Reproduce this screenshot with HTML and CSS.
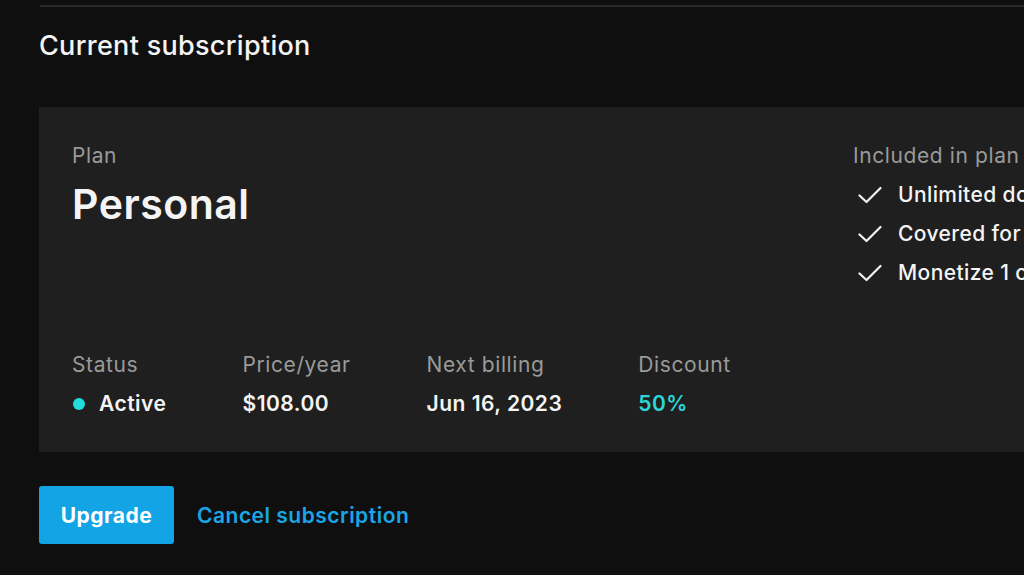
FILE: index.html
```html
<!DOCTYPE html>
<html lang="en">
<head>
<meta charset="utf-8">
<title>Current subscription</title>
<link rel="stylesheet" href="styles.css">
</head>
<body>
<div class="page">
  <div class="rule"></div>
  <h1 class="title">Current subscription</h1>
  <section class="card">
    <div class="main">
      <div class="plan">
        <div class="label">Plan</div>
        <div class="plan-name">Personal</div>
      </div>
      <div class="stats">
        <div class="stat">
          <div class="label">Status</div>
          <div class="value"><span class="dot"></span>Active</div>
        </div>
        <div class="stat">
          <div class="label">Price/year</div>
          <div class="value">$108.00</div>
        </div>
        <div class="stat">
          <div class="label">Next billing</div>
          <div class="value">Jun 16, 2023</div>
        </div>
        <div class="stat">
          <div class="label">Discount</div>
          <div class="value accent">50%</div>
        </div>
      </div>
    </div>
    <div class="included">
      <div class="label">Included in plan</div>
      <ul class="features">
        <li><svg class="check" viewBox="0 0 24 18" width="24" height="18"><path d="M1.5 9.5 L8.5 16 L22.5 2" fill="none" stroke="#f2f2f2" stroke-width="2.2" stroke-linecap="round" stroke-linejoin="round"/></svg>Unlimited downloads</li>
        <li><svg class="check" viewBox="0 0 24 18" width="24" height="18"><path d="M1.5 9.5 L8.5 16 L22.5 2" fill="none" stroke="#f2f2f2" stroke-width="2.2" stroke-linecap="round" stroke-linejoin="round"/></svg>Covered for personal use</li>
        <li><svg class="check" viewBox="0 0 24 18" width="24" height="18"><path d="M1.5 9.5 L8.5 16 L22.5 2" fill="none" stroke="#f2f2f2" stroke-width="2.2" stroke-linecap="round" stroke-linejoin="round"/></svg>Monetize 1 channel</li>
      </ul>
    </div>
  </section>
  <div class="actions">
    <button class="btn">Upgrade</button>
    <a class="link" href="#">Cancel subscription</a>
  </div>
</div>
</body>
</html>
```

FILE: styles.css
```css
* { box-sizing: border-box; }
html, body {
  margin: 0;
  padding: 0;
  background: #0f0f10;
  overflow: hidden;
}
body {
  font-family: Inter, "Noto Sans", "Liberation Sans", sans-serif;
  color: #f4f4f4;
  width: 1024px;
  height: 575px;
}
.page {
  padding-left: 39px;
  width: 1400px;
}
.rule {
  margin-top: 5px;
  margin-left: 1px;
  height: 2px;
  background: #2a2a2b;
}
.title {
  margin: 23px 0 0 0;
  font-size: 27px;
  line-height: 32px;
  font-weight: 500;
  letter-spacing: 0.3px;
}
.card {
  margin-top: 45px;
  height: 345px;
  background: #1f1f1f;
  display: flex;
  padding: 37px 0 36px 33px;
}
.main {
  width: 781px;
  display: flex;
  flex-direction: column;
  justify-content: space-between;
}
.label {
  font-size: 21px;
  line-height: 24px;
  color: #9a9a9a;
  font-weight: 400;
  letter-spacing: 0.6px;
}
.plan-name {
  margin-top: 11px;
  font-size: 41px;
  line-height: 50px;
  font-weight: 600;
  letter-spacing: 0.5px;
}
.stats {
  display: flex;
  gap: 76px;
}
.stat .value {
  margin-top: 15px;
  font-size: 21px;
  line-height: 24px;
  font-weight: 600;
  letter-spacing: 0.5px;
  display: flex;
  align-items: center;
}
.dot {
  width: 12px;
  height: 12px;
  border-radius: 50%;
  background: #22dcdc;
  margin: 0 14px 0 1px;
}
.accent { color: #2ad6d6; }
.included { flex: 1; }
.features {
  list-style: none;
  margin: 7px 0 0 0;
  padding: 0;
}
.features li {
  display: flex;
  align-items: center;
  font-size: 21px;
  line-height: 39px;
  font-weight: 500;
  letter-spacing: 0.4px;
  white-space: nowrap;
}
.check {
  margin: 0 16px 0 5px;
}
.actions {
  margin-top: 34px;
  display: flex;
  align-items: center;
  gap: 23px;
}
.btn {
  height: 58px;
  width: 135px;
  border: none;
  border-radius: 3px;
  background: #13a4e6;
  color: #ffffff;
  font-family: inherit;
  font-size: 21px;
  font-weight: 700;
  letter-spacing: 0.5px;
  padding: 0;
}
.link {
  color: #1aa6e6;
  font-size: 21px;
  font-weight: 600;
  letter-spacing: 0.5px;
  text-decoration: none;
}
```
